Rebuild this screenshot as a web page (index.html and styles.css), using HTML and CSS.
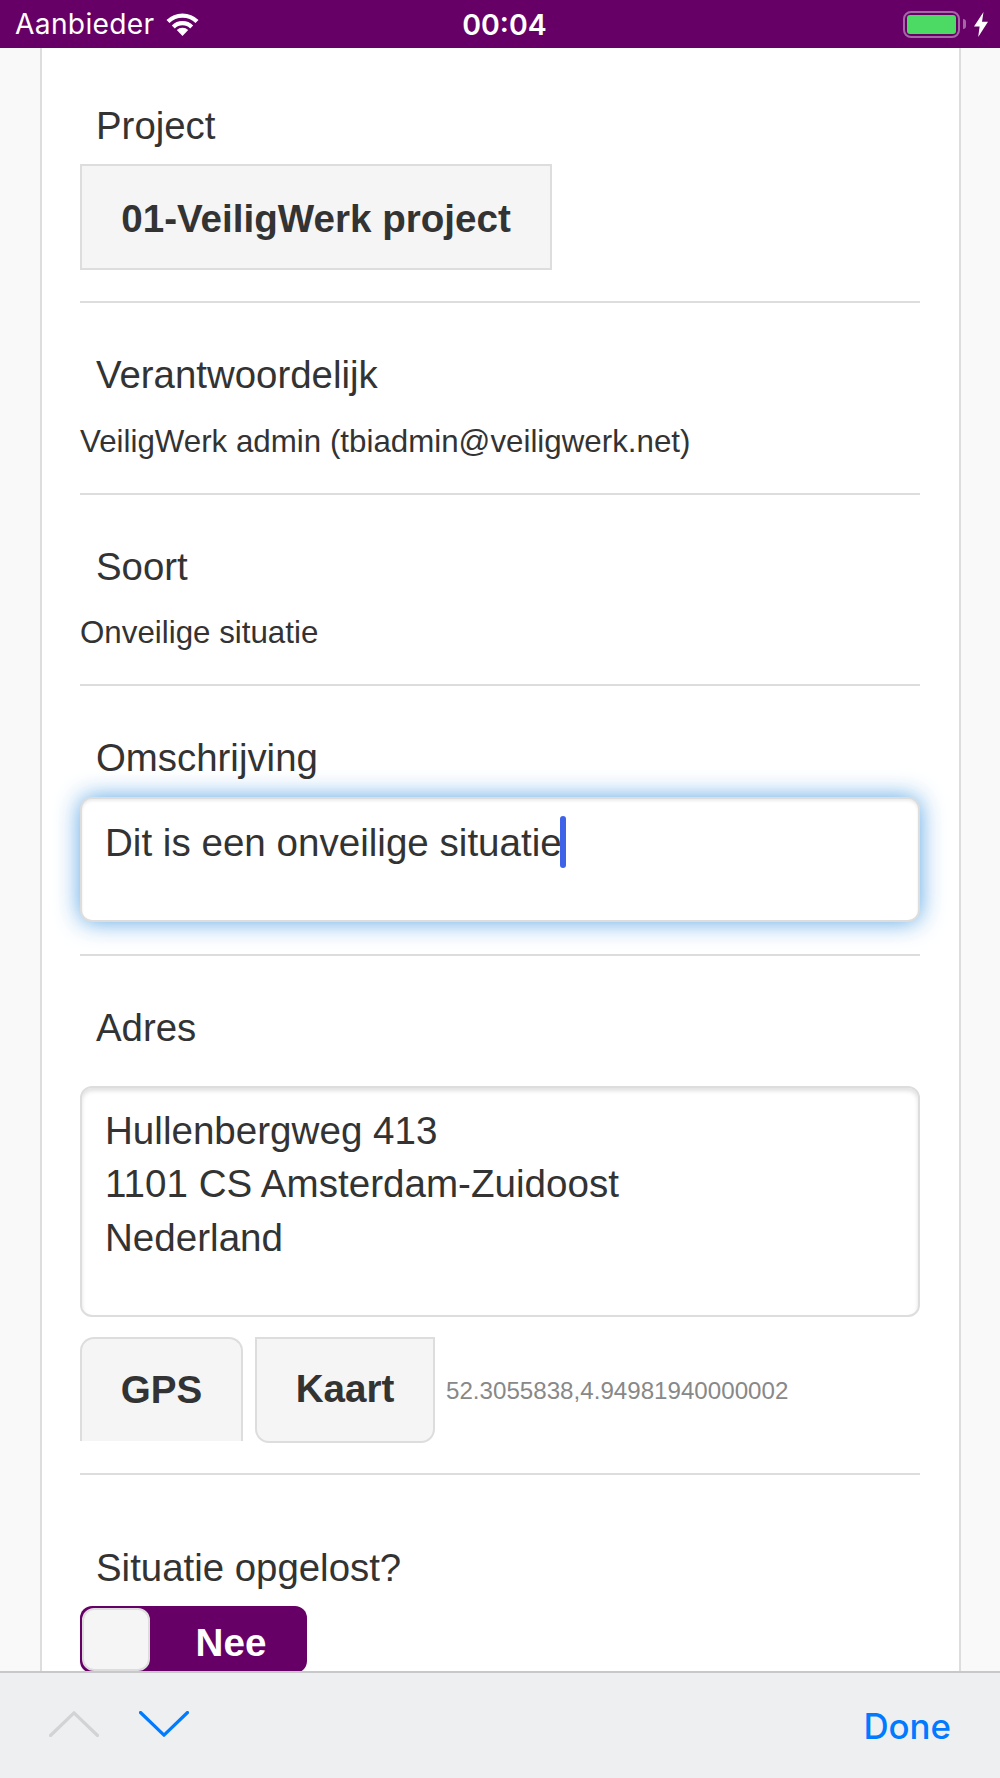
FILE: index.html
```html
<!DOCTYPE html>
<html lang="nl">
<head>
<meta charset="utf-8">
<title>Melding</title>
<link rel="stylesheet" href="styles.css">
</head>
<body>
<div class="screen">
  <header class="statusbar">
    <div class="status-left">
      <span class="carrier">Aanbieder</span>
      <svg class="wifi" viewBox="0 0 33 23" aria-hidden="true">
        <path d="M2 8.6a20.5 20.5 0 0 1 29 0" />
        <path d="M7.3 14a13 13 0 0 1 18.4 0" />
        <path class="wedge" d="M16.5 23 10.8 17a8.2 8.2 0 0 1 11.4 0Z" />
      </svg>
    </div>
    <span class="clock">00:04</span>
    <div class="status-right">
      <div class="battery"><div class="battery-fill"></div></div>
      <div class="battery-nub"></div>
      <svg class="bolt" viewBox="0 0 14 25" aria-hidden="true"><path d="M9.5 0 0 14.5h5.6L4.2 25 14 9.8H8Z"/></svg>
    </div>
  </header>

  <main class="viewport">
    <div class="panel">
      <section class="row row-first">
        <div class="label">Project</div>
        <div class="btn btn-project">01-VeiligWerk project</div>
      </section>
      <section class="row">
        <div class="label label-static">Verantwoordelijk</div>
        <div class="value">VeiligWerk admin (tbiadmin@veiligwerk.net)</div>
      </section>
      <section class="row">
        <div class="label label-static">Soort</div>
        <div class="value">Onveilige situatie</div>
      </section>
      <section class="row row-focus">
        <div class="label">Omschrijving</div>
        <div class="field field-focus">Dit is een onveilige situatie<span class="caret"></span></div>
      </section>
      <section class="row row-address">
        <div class="label label-address">Adres</div>
        <div class="field field-address">Hullenbergweg 413<br>1101 CS Amsterdam-Zuidoost<br>Nederland</div>
        <div class="actions">
          <div class="btn btn-gps">GPS</div>
          <div class="btn btn-map">Kaart</div>
          <span class="coords">52.3055838,4.94981940000002</span>
        </div>
      </section>
      <section class="row row-last">
        <div class="label">Situatie opgelost?</div>
        <div class="toggle">
          <div class="toggle-knob"></div>
          <span class="toggle-text">Nee</span>
        </div>
      </section>
    </div>
  </main>

  <footer class="toolbar">
    <div class="nav-arrows">
      <svg class="chevron chevron-off" viewBox="0 0 50 26" aria-hidden="true"><path d="M1.5 24.5 25 1.8l23.5 22.7"/></svg>
      <svg class="chevron chevron-on" viewBox="0 0 50 26" aria-hidden="true"><path d="M1.5 1.5 25 24.2 48.5 1.5"/></svg>
    </div>
    <span class="done">Done</span>
  </footer>
</div>
</body>
</html>
```

FILE: styles.css
```css
* { box-sizing: border-box; }
html, body { margin: 0; padding: 0; }
body { font-family: "Liberation Sans", Arial, sans-serif; color: #333; background: #f9f9f9; }

.screen { width: 1000px; height: 1778px; display: flex; flex-direction: column; overflow: hidden; }

.statusbar {
  height: 48px; flex: none; background: #660066; color: #fff;
  display: grid; grid-template-columns: 1fr auto 1fr; align-items: center;
  font-family: Inter, "Liberation Sans", sans-serif; padding: 0 12px 0 15px;
}
.status-left { display: flex; align-items: center; gap: 12px; }
.carrier { font-size: 28.2px; letter-spacing: .3px; }
.wifi { width: 33px; height: 23px; display: block; }
.wifi path { fill: none; stroke: #fff; stroke-width: 4.2; }
.wifi .wedge { fill: #fff; stroke: none; }
.clock { font-size: 28.5px; font-weight: 600; margin-left: 6px; }
.status-right { display: flex; align-items: center; justify-content: flex-end; }
.battery { width: 57px; height: 27px; border: 2.5px solid #a566a5; border-radius: 8px; padding: 2px; }
.battery-fill { height: 100%; background: #4cd964; border-radius: 3px; }
.battery-nub { width: 3px; height: 10px; background: #a566a5; border-radius: 0 3px 3px 0; margin: 0 8px 0 3px; }
.bolt { width: 14px; height: 25px; display: block; fill: #fff; }

.viewport { flex: 1; min-height: 0; overflow: hidden; }
.panel {
  width: 921px; margin-left: 40px; min-height: 100%; background: #fff;
  border-left: 2px solid #ddd; border-right: 2px solid #ddd; padding: 0 39px 0 38px;
}

.row { padding: 45px 0 31px; border-bottom: 2px solid #ddd; }
.row-first { padding-top: 50.5px; }
.row-focus { padding-bottom: 32px; }
.row-address { padding-bottom: 30px; }
.row-last { padding: 65.5px 0 0; border-bottom: 0; }

.label { font-size: 38.4px; line-height: 53px; margin: 0 0 12.5px 16px; }
.label-static { margin-bottom: 20.5px; }
.label-address { margin-bottom: 32.5px; }

.value { font-size: 31.3px; line-height: 40px; }

.btn {
  display: flex; align-items: center; justify-content: center;
  background: #f5f5f5; border: 2.67px solid #ddd;
  font-size: 38.6px; font-weight: 700;
}
.btn-project { width: 472px; height: 106px; padding-top: 3px; }

.field {
  width: 100%; background: #fff; border: 2.67px solid #ddd; border-radius: 12px;
  font-size: 38.6px; line-height: 53.33px; padding: 16px 23px;
}
.field-focus {
  height: 125px; padding-top: 17px;
  box-shadow: inset 0 2px 3px rgba(0, 0, 0, .08), 0 0 24px rgba(80, 160, 228, .95);
}
.field-address {
  height: 231px;
  box-shadow: inset 0 3px 4px rgba(0, 0, 0, .12);
}
.caret {
  display: inline-block; width: 6px; height: 52px; margin-left: -2px;
  vertical-align: top; background: #3f63e8; border-radius: 3px;
}

.actions { display: flex; align-items: flex-start; margin-top: 20px; }
.btn-gps { width: 163px; height: 104px; border-bottom: 0; border-radius: 14px 14px 0 0; }
.btn-map { width: 180px; height: 106px; margin-left: 12px; border-radius: 0 0 14px 14px; padding-bottom: 2px; }
.coords { font-size: 24.15px; color: #888; margin: 40px 0 0 11px; }

.toggle {
  width: 227px; height: 67px; background: #660066; border-radius: 12px;
  padding: 2px; display: flex; align-items: flex-start;
}
.toggle-knob { width: 68px; height: 63px; background: #f5f5f5; border: 2.67px solid #ddd; border-radius: 12px; }
.toggle-text { flex: 1; text-align: center; color: #fff; font-size: 38.6px; font-weight: 700; line-height: 70px; padding-left: 7px; }

.toolbar {
  height: 107px; flex: none; background: #eeeff1; border-top: 2px solid #c8c8ca;
  display: flex; justify-content: space-between; padding: 0 49px 0 49px;
}
.nav-arrows { display: flex; gap: 40px; padding-top: 38px; }
.chevron { width: 50px; height: 26px; display: block; fill: none; stroke-width: 3.2; stroke-linecap: round; stroke-linejoin: round; }
.chevron-off { stroke: #d2d3d5; }
.chevron-on { stroke: #007aff; }
.done {
  font-family: Inter, "Liberation Sans", sans-serif; font-size: 34.8px; font-weight: 500;
  color: #007aff; line-height: 40px; padding-top: 33px;
}
```
